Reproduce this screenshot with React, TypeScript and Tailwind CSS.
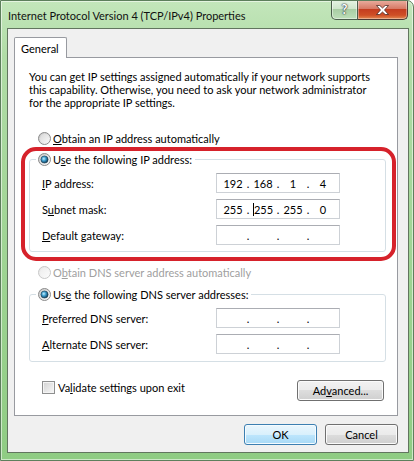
import { Fragment, useId } from 'react'

const btn =
  'h-[21px] rounded-[3px] border border-[#707070] bg-[linear-gradient(to_bottom,#f2f2f2_0%,#ebebeb_50%,#dddddd_50%,#cfcfcf_100%)] shadow-[inset_0_0_0_1px_#fbfbfb] flex items-center justify-center text-black'

function Radio({ checked = false, disabled = false }: { checked?: boolean; disabled?: boolean }) {
  const id = useId().replace(/[^a-zA-Z0-9]/g, '')
  return (
    <svg width="13" height="13" viewBox="0 0 13 13" className="shrink-0">
      <defs>
        <linearGradient id={`${id}r`} x1="0" y1="0" x2="1" y2="1">
          <stop offset="0" stopColor={disabled ? '#e4e4e4' : '#c4c4c4'} />
          <stop offset="1" stopColor="#ffffff" />
        </linearGradient>
        <linearGradient id={`${id}i`} x1="0" y1="0" x2="1" y2="1">
          <stop offset="0" stopColor={disabled ? '#ededed' : '#d9d9d9'} />
          <stop offset="1" stopColor={disabled ? '#fafafa' : '#f7f7f7'} />
        </linearGradient>
        <radialGradient id={`${id}d`} cx="0.4" cy="0.4" r="0.65">
          <stop offset="0" stopColor="#c8f1ff" />
          <stop offset="0.45" stopColor="#3a9bcc" />
          <stop offset="1" stopColor="#0b3149" />
        </radialGradient>
      </defs>
      <circle cx="6.5" cy="6.5" r="6" fill={`url(#${id}r)`} stroke={disabled ? '#c8c8c8' : '#8a8a8a'} />
      <circle cx="6.5" cy="6.5" r="4.4" fill={`url(#${id}i)`} />
      {checked && <circle cx="6.5" cy="6.5" r="3.6" fill={`url(#${id}d)`} stroke="#1a3a50" strokeWidth="0.6" />}
    </svg>
  )
}

function IpBox({ parts = ['', '', '', ''], cursorAt }: { parts?: string[]; cursorAt?: number }) {
  return (
    <div className="w-[124px] h-[20px] border border-[#cdd1d6] border-t-[#abadb3] bg-white flex items-center px-[4px]">
      {parts.map((p, i) => (
        <Fragment key={i}>
          {i > 0 && <span className="w-[6px] text-center">.</span>}
          <span className="w-[24px] flex items-center justify-center">
            {cursorAt === i && <span className="w-px h-[13px] bg-black" />}
            {p}
          </span>
        </Fragment>
      ))}
    </div>
  )
}

function Field({ label, parts, cursorAt }: { label: React.ReactNode; parts?: string[]; cursorAt?: number }) {
  return (
    <div className="flex items-center h-[20px] pl-[12px]">
      <div className="w-[174px]">{label}</div>
      <IpBox parts={parts} cursorAt={cursorAt} />
    </div>
  )
}

const u = (c: string) => <span className="underline underline-offset-[1px]">{c}</span>

export default function App() {
  return (
    <div className="w-[414px] h-[461px] overflow-hidden rounded-tr-[7px] border border-[#5d7f5c] bg-[linear-gradient(to_bottom,#c3e6bb_0%,#b0dca6_12%,#a1d596_50%,#8fcc83_100%)] shadow-[inset_0_0_0_1px_rgba(255,255,255,0.55)] font-[family-name:Lato,sans-serif] text-[11px] leading-[13px] text-black select-none">
      {/* Title bar */}
      <div className="h-[27px] flex items-start">
        <div className="pl-[7px] pt-[8px] text-[#111]">Internet Protocol Version 4 (TCP/IPv4) Properties</div>
        <div className="ml-auto mr-[5px] flex -mt-px">
          <div className="w-[27px] h-[20px] border border-t-0 border-[#4b5e4b] rounded-bl-[5px] bg-[linear-gradient(to_bottom,#e6f3e4_0%,#cfe6cc_45%,#a9cea4_50%,#bedfb9_100%)] shadow-[inset_0_0_0_1px_rgba(255,255,255,0.45)] flex items-center justify-center text-white font-bold text-[13px] [text-shadow:0_0_2px_#223,0_0_1px_#000]">
            ?
          </div>
          <div className="w-[50px] h-[20px] border border-t-0 border-l-0 border-[#4b3a35] rounded-br-[5px] bg-[linear-gradient(to_bottom,#eab0a2_0%,#d77a66_45%,#c43d20_50%,#cf4f26_80%,#e28a52_100%)] shadow-[inset_0_0_0_1px_rgba(255,255,255,0.35)] flex items-center justify-center">
            <svg width="13" height="10" viewBox="0 0 13 10">
              <polygon
                points="0.5,0.5 3.8,0.5 6.5,3 9.2,0.5 12.5,0.5 8.5,5 12.5,9.5 9.2,9.5 6.5,7 3.8,9.5 0.5,9.5 4.5,5"
                fill="#ffffff"
                stroke="#4a2a22"
                strokeWidth="0.8"
                strokeLinejoin="round"
              />
            </svg>
          </div>
        </div>
      </div>

      {/* Client area */}
      <div className="ml-[6px] mr-[4px] h-[425px] border border-[#62755f] bg-[#f0f0f0] flex flex-col">
        <div className="pl-[6px] pt-[8px] flex">
          <div className="relative z-10 -mb-px h-[21px] w-[53px] bg-white border border-b-0 border-[#989aa0] rounded-t-[2px] pl-[6px] flex items-center">
            General
          </div>
        </div>

        <div className="ml-[6px] mr-[10px] h-[359px] border border-[#989aa0] bg-white pt-[12px]">
          <p className="ml-[14px]">
            You can get IP settings assigned automatically if your network supports
            <br />
            this capability. Otherwise, you need to ask your network administrator
            <br />
            for the appropriate IP settings.
          </p>

          <div className="mt-[21px] ml-[23px] h-[16px] flex items-center gap-[2px]">
            <Radio />
            <span>{u('O')}btain an IP address automatically</span>
          </div>

          {/* red highlight */}
          <div className="mt-px ml-[6px] w-[375px] border-[4px] border-[#d6222b] rounded-[15px] pl-[4px] pb-[5px]">
            <fieldset className="w-[357px] border border-[#d5dfe5] rounded-[3px] pt-[6px] pb-[6px]">
              <legend className="ml-[6px] pl-[2px] pr-[3px] h-[16px] flex items-center gap-[2px]">
                <Radio checked />
                <span>U{u('s')}e the following IP address:</span>
              </legend>
              <div className="flex flex-col gap-[6px]">
                <Field label={<>{u('I')}P address:</>} parts={['192', '168', '1', '4']} />
                <Field label={<>S{u('u')}bnet mask:</>} parts={['255', '255', '255', '0']} cursorAt={1} />
                <Field label={<>{u('D')}efault gateway:</>} />
              </div>
            </fieldset>
          </div>

          <div className="mt-[3px] ml-[23px] h-[16px] flex items-center gap-[2px] text-[#a0a0a0]">
            <Radio disabled />
            <span>O{u('b')}tain DNS server address automatically</span>
          </div>

          <fieldset className="mt-[6px] ml-[14px] w-[357px] border border-[#d5dfe5] rounded-[3px] pt-[6px] pb-[7px]">
            <legend className="ml-[6px] pl-[2px] pr-[3px] h-[16px] flex items-center gap-[2px]">
              <Radio checked />
              <span>Us{u('e')} the following DNS server addresses:</span>
            </legend>
            <div className="flex flex-col gap-[6px]">
              <Field label={<>{u('P')}referred DNS server:</>} />
              <Field label={<>{u('A')}lternate DNS server:</>} />
            </div>
          </fieldset>

          <div className="mt-[18px] pl-[27px] pr-[13px] flex items-start">
            <div className="mt-px h-[13px] flex items-center gap-[3px]">
              <span className="w-[13px] h-[13px] border border-[#8e8f8f] bg-[linear-gradient(135deg,#d2d2d2,#f8f8f8)] shadow-[inset_0_0_0_1px_#f4f4f4]" />
              <span>Va{u('l')}idate settings upon exit</span>
            </div>
            <button className={`${btn} ml-auto w-[87px]`}>Ad{u('v')}anced...</button>
          </div>
        </div>

        <div className="mt-[8px] mr-[10px] flex justify-end gap-[8px]">
          <button className="h-[21px] w-[73px] rounded-[3px] border border-[#3c7fb1] bg-[linear-gradient(to_bottom,#eaf6fd_0%,#d9f0fc_50%,#bee6fd_50%,#a7d9f5_100%)] shadow-[inset_0_0_0_1px_#f4fbff] flex items-center justify-center">
            OK
          </button>
          <button className={`${btn} w-[73px]`}>Cancel</button>
        </div>
      </div>
    </div>
  )
}
